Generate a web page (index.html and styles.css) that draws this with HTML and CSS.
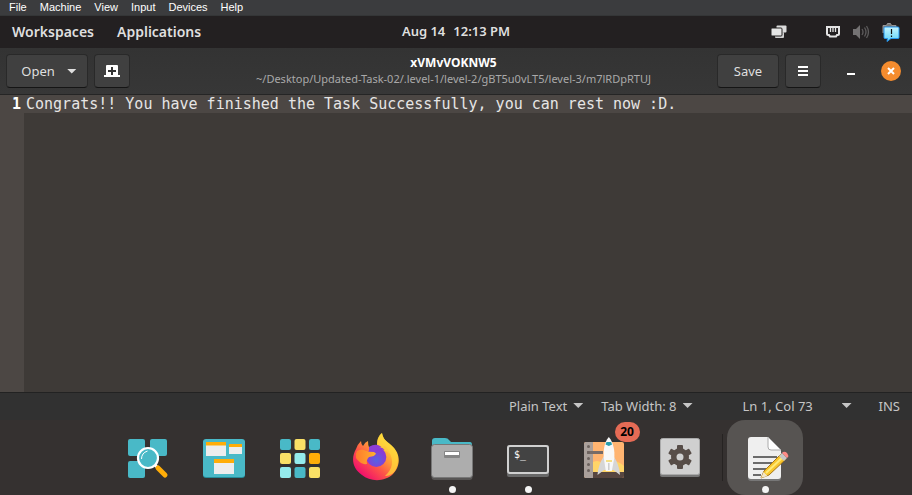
FILE: index.html
```html
<!DOCTYPE html>
<html lang="en">
<head>
<meta charset="utf-8">
<title>xVMvVOKNW5</title>
<link rel="stylesheet" href="styles.css">
</head>
<body>
<nav class="vm-menu" aria-label="Machine window">
  <button>File</button><button>Machine</button><button>View</button><button>Input</button><button>Devices</button><button>Help</button>
</nav>

<header class="panel">
  <div class="panel-left"><button>Workspaces</button><button>Applications</button></div>
  <button class="clock"><span>Aug 14</span><span>12:13 PM</span></button>
  <div class="tray">
    <svg class="tray-windows" width="18" height="16" viewBox="0 0 18 16" aria-hidden="true"><rect x="6.500" y="1.500" width="10" height="7" rx="1" fill="#dcdcdc"/><rect x="5" y="8" width="9" height="6" rx="1" fill="#d0d0d0"/><rect x="1" y="4" width="11" height="8" rx="1" fill="#e6e6e6" stroke="#232021"/></svg>
    <svg class="tray-net" width="16" height="16" viewBox="0 0 16 16" aria-hidden="true"><path d="M2 3h12v7q0 1-1 1h-1l-1 1.500H5L4 11H3q-1 0-1-1z" fill="none" stroke="#e4e4e4" stroke-width="2"/><path d="M5.500 4v4M8 4v4M10.500 4v4" stroke="#e4e4e4" stroke-width="1.300"/></svg>
    <svg class="tray-sound" width="18" height="16" viewBox="0 0 18 16" aria-hidden="true"><path d="M1 5h3l4-4v14l-4-4H1z" fill="#747273"/><path d="M10 5q2 3 0 6M12.500 3.500q3 4.500 0 9M14.500 2q4 6 0 12" fill="none" stroke="#5d5b5c" stroke-width="1.300"/></svg>
    <svg width="18" height="20" viewBox="0 0 18 20" aria-hidden="true"><defs><linearGradient id="bubble" x2="0" y2="1"><stop stop-color="#c5f5ff"/><stop offset="1" stop-color="#5fd3f8"/></linearGradient></defs><path d="M1 11V3.500h3.500l1-2h3l1 2H14v3" fill="#777" stroke="#969696"/><path d="M3 5h13q1 0 1 1v9.500q0 1-1 1H9l-4 3 .5-3H3q-1 0-1-1V6q0-1 1-1z" fill="url(#bubble)" stroke="#2495ef"/><path d="M9.500 7v5M9.500 13.500v1.500" stroke="#111" stroke-width="1.200"/></svg>
  </div>
</header>

<div class="headerbar">
  <div class="actions">
    <button class="btn open">Open <i class="caret"></i></button>
    <button class="btn icon" aria-label="New tab"><svg width="16" height="14" viewBox="0 0 16 14"><path d="M3 1h10q1 0 1 1v9h2v2H0v-2h2V2q0-1 1-1z" fill="#fff"/><path d="M8 3v8M4 7h8" stroke="#333" stroke-width="2"/></svg></button>
  </div>
  <div class="title"><h1>xVMvVOKNW5</h1><p>~/Desktop/Updated-Task-02/.level-1/level-2/gBT5u0vLT5/level-3/m7lRDpRTUJ</p></div>
  <div class="actions end">
    <button class="btn save">Save</button>
    <button class="btn icon" aria-label="Menu"><svg width="10" height="10" viewBox="0 0 10 10"><path d="M0 1h10M0 5h10M0 9h10" stroke="#fff" stroke-width="2"/></svg></button>
    <button class="minimize" aria-label="Minimize"><svg width="8" height="10" viewBox="0 0 8 10"><path d="M0 8h8" stroke="#fff" stroke-width="2"/></svg></button>
    <button class="close" aria-label="Close"><svg width="8" height="8" viewBox="0 0 8 8"><path d="M1 1l6 6M7 1L1 7" stroke="#fff" stroke-width="2"/></svg></button>
  </div>
</div>

<main class="editor">
  <div class="gutter">1</div>
  <div class="line">Congrats!! You have finished the Task Successfully, you can rest now :D.</div>
</main>

<footer class="status">
  <button>Plain Text <i class="caret"></i></button>
  <button class="tabs">Tab Width: 8 <i class="caret"></i></button>
  <button class="position">Ln 1, Col 73 <i class="caret"></i></button>
  <span class="mode">INS</span>
</footer>

<nav class="dock" aria-label="Dock">
  <button aria-label="Launcher"><svg viewBox="0 0 48 48"><g fill="#49b9c7"><rect x="4" y="6" width="17" height="17" rx="2"/><rect x="26" y="6" width="17" height="17" rx="2"/><rect x="4" y="28" width="17" height="17" rx="2"/></g><path d="M31 32l3 3" stroke="#fff" stroke-width="3"/><path d="M34 35l7 7" stroke="#ffad08" stroke-width="5" stroke-linecap="round"/><circle cx="24" cy="25" r="10" fill="#49b9c7" stroke="#fff" stroke-width="2.200"/><path d="M17.500 26q0-6 6-8" fill="none" stroke="#fff"/></svg></button>
  <button aria-label="Workspaces"><svg viewBox="0 0 48 48"><rect x="3" y="7" width="42" height="38" rx="3" fill="#258c99"/><rect x="3" y="6" width="42" height="38" rx="3" fill="#49b9c7"/><g fill="#ededed"><path d="M6 9h20v14H6zM29 11h13v10H29zM14 26h20v15H14z"/></g><path d="M6 9h20v3.500H6zM29 11h13v3H29zM14 26h20v4H14z" fill="#ffad08"/></svg></button>
  <button aria-label="Applications"><svg viewBox="0 0 48 48"><g transform="translate(0 1)"><g fill="#49b9c7"><rect x="4" y="5" width="11" height="11" rx="2"/><rect x="33" y="5" width="11" height="11" rx="2"/><rect x="18.500" y="33" width="11" height="11" rx="2"/></g><g fill="#fae066"><rect x="18.500" y="5" width="11" height="11" rx="2"/><rect x="4" y="19" width="11" height="11" rx="2"/><rect x="33" y="33" width="11" height="11" rx="2"/></g><g fill="#94ebec"><rect x="18.500" y="19" width="11" height="11" rx="2"/><rect x="4" y="33" width="11" height="11" rx="2"/></g><rect x="33" y="19" width="11" height="11" rx="2" fill="#ffad08"/></g></svg></button>
  <button aria-label="Firefox"><svg viewBox="0 0 48 48"><defs><linearGradient id="fox" x1=".85" y1=".15" x2=".2" y2=".9"><stop stop-color="#ffe840"/><stop offset=".35" stop-color="#ffa436"/><stop offset=".65" stop-color="#ff5548"/><stop offset="1" stop-color="#f0106c"/></linearGradient><radialGradient id="globe" cy=".65"><stop stop-color="#5563e4"/><stop offset="1" stop-color="#8a3bd3"/></radialGradient><linearGradient id="face" x2="1"><stop stop-color="#ff7a2c"/><stop offset="1" stop-color="#ffb02e"/></linearGradient></defs><path d="M4 16q1-4 5-8 0 3 2 5 2-4 5-5 0 4 1 6l8-2q0-8 5-12c1 6 4 8 9 12 11 9 9 22 2 29-8 8-23 8-31 1C0 35-1 25 4 16z" fill="url(#fox)"/><path d="M30 0c1 6 4 8 9 12 9 8 8 19 4 26-3 4-7 5-10 5 8-7 9-16 4-24-4-5-11-6-12-8 0-5 2-9 5-11z" fill="#ffd93b" opacity=".7"/><circle cx="24.300" cy="24" r="10" fill="url(#globe)"/><path d="M17 14q6-4 11-1l5 4q-8-2-11 2l-5-2z" fill="#8d3dd6"/><path d="M5 18q5-3 9 0 3 1 8 1l2 1.500q-1 3-7 3.500-3 3-2 7c-5 1-9-3-11-6q-1-4 1-7z" fill="url(#face)"/><path d="M27 15q5-1 6 3 3 0 4 3 0-5-4-8z" fill="#ffc83b"/></svg></button>
  <button aria-label="Files"><svg viewBox="0 0 48 48"><path d="M4 8q0-3 3-3h10q3 0 4 2l2 2h19q2 0 2 3v6H4z" fill="#49b9c7"/><rect x="3.500" y="13" width="41" height="34" rx="3" fill="#575554"/><rect x="3.500" y="11.500" width="41" height="33" rx="3" fill="#adadad" stroke="#777" stroke-width="1"/><rect x="16" y="18" width="16" height="7" rx="1" fill="#858585"/><rect x="17" y="19" width="14" height="3" fill="#fff"/></svg><i class="running"></i></button>
  <button class="terminal" aria-label="Terminal"><svg viewBox="0 0 48 48"><rect x="3" y="12" width="42" height="32" rx="2" fill="#686868"/><rect x="4" y="13" width="40" height="27" rx="2" fill="#434343" stroke="#d0d0d0" stroke-width="2"/><text class="prompt" x="10" y="25">$_</text></svg><i class="running"></i></button>
  <button aria-label="Pop!_Shop"><svg viewBox="0 0 48 48"><rect x="4" y="9" width="40" height="36" rx="2" fill="#ffb471"/><path d="M13 29q6-3 10 2 11-7 21 2v9H13z" fill="#ffd568"/><path d="M13 39h31v4q0 2-2 2H13z" fill="#574640"/><path d="M6 9h7v36H6q-2 0-2-2V11q0-2 2-2z" fill="#aaa09b"/><path d="M7 19.500h16" stroke="#776b67" stroke-width="3"/><g fill="#6c625e"><circle cx="8.500" cy="13.500" r="1.500"/><circle cx="8.500" cy="19.500" r="1.500"/><circle cx="8.500" cy="25.500" r="1.500"/><circle cx="8.500" cy="31.500" r="1.500"/><circle cx="8.500" cy="37.500" r="1.500"/></g><path d="M24 23q-6 9-6.500 19l6.500-5h9.500l6.500 5q-.5-10-6.500-19z" fill="#d6d6d6"/><path d="M28.800 4c-5 6-5.500 14-5 21l2 13h6l2.500-13c.5-7-.5-15-5.500-21z" fill="#f8f8f8"/><path d="M26.500 9h4.600l1 2.500-3.300 1.500-3.300-1.500z" fill="#289cad"/><path d="M26 28h6" stroke="#f4d860" stroke-width="1.500"/><path d="M28.800 30v7" stroke="#ccc" stroke-width="1.500"/></svg><span class="badge">20</span></button>
  <button aria-label="Settings"><svg viewBox="0 0 48 48"><rect x="4" y="6" width="40" height="38" rx="2" fill="#777"/><rect x="4.500" y="5.500" width="39" height="36" rx="2" fill="#d0d0d0" stroke="#aaa"/><g transform="translate(24 24)" fill="#574d48"><circle r="9"/><g id="teeth"><rect x="-3" y="-12" width="6" height="24" rx="1"/></g><use href="#teeth" transform="rotate(60)"/><use href="#teeth" transform="rotate(120)"/><circle r="3.500" fill="#d0d0d0"/></g></svg></button>
  <i class="separator"></i>
  <button class="active" aria-label="Text Editor"><svg viewBox="0 0 48 48"><path d="M10 5h18l12 13v27q0 3-3 3H10q-3 0-3-3V8q0-3 3-3z" fill="#777"/><path d="M10 4h17l13 13v26q0 3-3 3H10q-3 0-3-3V7q0-3 3-3z" fill="#efefef"/><path d="M27 4v10q0 3 3 3h10z" fill="#fff" stroke="#aaa"/><path d="M12 24h24M12 30h20M12 36h15M12 42h8" stroke="#6b6b6b" stroke-width="2"/><path d="M20 45l3-7 17-17 5 5-17 16z" fill="#f8c62d" stroke="#a87717"/><path d="M25 40l17-16" stroke="#ffea78" stroke-width="2"/><path d="M20 45l2.500-6 4 4z" fill="#f2e6c9"/><path d="M38 23l3-3 5 5-3 3z" fill="#c7c7c7"/><path d="M41 20l1-1q2-1 4 1 2 3 1 4l-1 1z" fill="#ff8b87"/></svg><i class="running"></i></button>
</nav>
</body>
</html>
```
FILE: styles.css
```css
* { box-sizing: border-box; }
body {
  margin: 0;
  min-height: 100vh;
  display: flex;
  flex-direction: column;
  background: #353130;
  color: #dfdfdf;
  font-family: "Noto Sans", sans-serif;
  font-size: 13px;
}
button {
  border: 0;
  padding: 0;
  background: none;
  color: inherit;
  font: inherit;
  white-space: nowrap;
}
svg { display: block; flex: none; }

.vm-menu {
  display: flex;
  gap: 13px;
  height: 16px;
  padding: 0 9px 2px;
  align-items: center;
  background: #3b3c3e;
  border-bottom: 1px solid #343637;
  color: #fff;
  font-family: "Liberation Sans", sans-serif;
  font-size: 11px;
  line-height: 12px;
}

.panel {
  display: grid;
  grid-template-columns: 1fr auto 1fr;
  align-items: center;
  height: 32px;
  padding: 0 12px 2px;
  background: #232021;
  font-size: 14px;
  font-weight: 600;
}
.panel-left { display: flex; gap: 23px; }
.clock { display: flex; gap: 8px; font-size: 13px; }
.tray { display: flex; justify-content: flex-end; align-items: center; padding-top: 2px; }
.tray-windows { margin-right: 37px; }
.tray-net { margin-right: 11px; }
.tray-sound { margin-right: 12px; }

.headerbar {
  display: grid;
  grid-template-columns: 1fr auto 1fr;
  align-items: center;
  height: 47px;
  padding: 0 11px 0 6px;
  background: linear-gradient(#333, #373737);
  border-bottom: 1px solid #252525;
}
.actions { display: flex; gap: 6px; align-items: center; }
.end { justify-content: flex-end; }
.btn {
  display: flex;
  align-items: center;
  justify-content: center;
  height: 34px;
  background: #404040;
  border: 1px solid #292929;
  border-bottom-color: #151515;
  border-radius: 4px;
}
.open { width: 82px; gap: 12px; padding-left: 4px; }
.save { width: 62px; }
.icon { width: 36px; }
.caret {
  width: 10px;
  height: 5px;
  background: currentColor;
  clip-path: polygon(0 0, 100% 0, 50% 100%);
}
.title { text-align: center; }
.title h1 { margin: 0; color: #fff; font-size: 12px; line-height: 16px; }
.title p { margin: 0; color: #a9a9a9; font-size: 11px; line-height: 16px; }
.minimize { width: 20px; margin: 0 14px; display: grid; place-items: center; }
.close {
  display: grid;
  place-items: center;
  width: 20px;
  height: 20px;
  border-radius: 50%;
  background: #f58c2e;
}

.editor {
  flex: 1;
  display: grid;
  grid-template-columns: 24px 1fr;
  background: #3e3a37;
  font-family: "DejaVu Sans Mono", monospace;
  font-size: 15px;
  line-height: 18px;
}
.gutter {
  padding-right: 3px;
  background: #4c4744;
  color: #fff;
  font-weight: 700;
  text-align: right;
}
.line { height: 18px; padding-left: 2px; background: #4c4744; color: #e6e5e4; white-space: pre; }

.status {
  display: flex;
  align-items: center;
  justify-content: flex-end;
  height: 28px;
  padding: 0 12px 2px;
  background: #313131;
  border-top: 1px solid #222;
  color: #c6c6c6;
}
.status button { display: flex; align-items: center; gap: 6px; }
.status .tabs { margin: 0 50px 0 18px; }
.status .position { width: 109px; justify-content: space-between; }
.mode { margin-left: 27px; }

.dock { display: flex; justify-content: center; height: 75px; }
.dock button {
  position: relative;
  width: 76px;
  padding-top: 13px;
  display: flex;
  justify-content: center;
}
.dock svg { width: 48px; height: 48px; }
.prompt { fill: #fff; font: 10px "DejaVu Sans Mono", monospace; }
.running {
  position: absolute;
  bottom: 2px;
  left: 35px;
  width: 7px;
  height: 7px;
  border-radius: 50%;
  background: #f4f4f4;
}
.badge {
  position: absolute;
  top: 2px;
  right: 2px;
  width: 25px;
  border-radius: 10px;
  background: #e66b55;
  color: #000;
  font-size: 12px;
  font-weight: 700;
  line-height: 20px;
}
.separator { width: 1px; margin: 14px 4px; background: #262322; }
.dock .active { background: #575452; border-radius: 18px; }
```
